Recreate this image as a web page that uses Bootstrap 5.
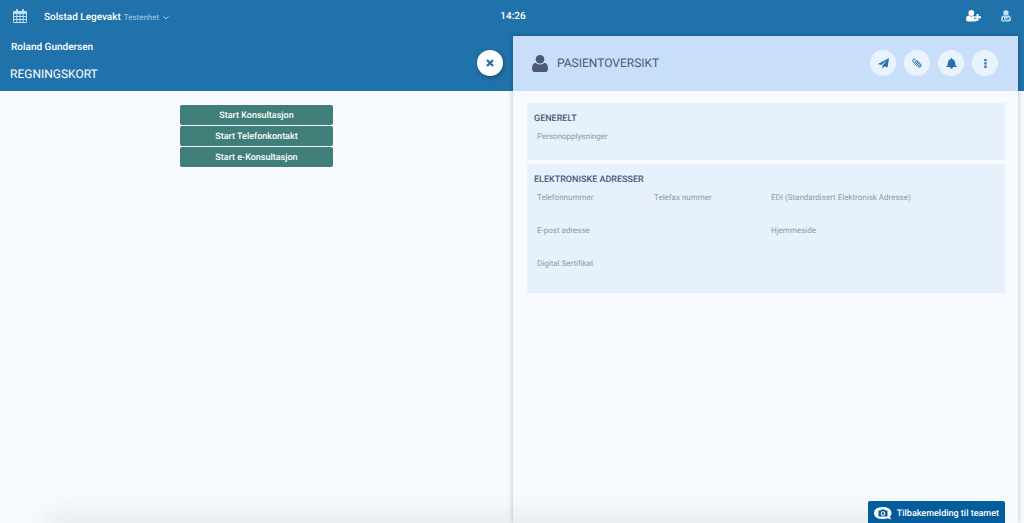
<!DOCTYPE html>
<html lang="no">
<head>
<meta charset="utf-8">
<meta name="viewport" content="width=device-width, initial-scale=1">
<title>Regningskort</title>
<link href="https://cdn.jsdelivr.net/npm/bootstrap@5.3.0/dist/css/bootstrap.min.css" rel="stylesheet">
<style>
  :root { --brand: #2072aa; --ink: #4b5878; --head: 55px; }
  body { font-family: Roboto, sans-serif; font-size: 9px; line-height: 12px; background: #f7faff; color: var(--ink); text-rendering: geometricPrecision; }
  button { text-rendering: inherit; }
  .topbar { height: 36px; background: var(--brand); color: #fff; padding: 0 13px 4px; }
  .topbar .side { flex: 1 1 0; }
  .topbar .btn { color: inherit; line-height: 14px; }
  .topbar .tools { gap: 20px; }
  .unit { font-size: 10px; font-weight: 500; margin-left: 17px; }
  .subunit { font-size: 8px; color: #a3cbe8; margin: 0 4px 0 3px; }
  .clock { font-size: 10px; font-weight: 500; padding: 2px 0 0 2px; }
  .workspace { background: linear-gradient(var(--brand) var(--head), transparent var(--head)); padding-right: 6px; }
  .pane-left { flex: 0 0 calc(50% + 4px); }
  .pane-head { height: var(--head); padding-bottom: 1px; }
  .pane-left .pane-head { padding: 0 10px 1px; }
  .left-names { padding-bottom: 4px; }
  .patient { font-size: 10px; line-height: 16px; font-weight: 500; margin: 0 0 10px 1px; }
  .pane-title { font-size: 12px; line-height: 16px; font-weight: 400; }
  .round { width: 26px; height: 26px; border-radius: 50%; border: 0; padding: 0; background: #e9f3fd; color: var(--brand); display: flex; align-items: center; justify-content: center; }
  .round-close { background: #fff; box-shadow: 1px 2px 4px rgba(0,0,0,.3); }
  .starts { width: 30%; gap: 1px; padding-top: 14px; }
  .btn-start { --bs-btn-color: #fff; --bs-btn-bg: #407e79; --bs-btn-hover-bg: #356b67; --bs-btn-hover-color: #fff; --bs-btn-border-width: 0; --bs-btn-font-size: 9px; --bs-btn-line-height: 12px; --bs-btn-border-radius: 2px; font-weight: 500; padding-top: 5px; padding-bottom: 3px; }
  .pane-right { background: #f7faff; box-shadow: 0 0 5px rgba(0,0,0,.25); }
  .pane-right .pane-head { background: #c9dff9; padding: 0 20px 1px 19px; }
  .pane-right .pane-title { margin-left: 9px; }
  .sections { padding: 12px 13px 12px 14px; gap: 4px; }
  .info { background: #e6f1fc; padding: 10px 5px 0; border-radius: 1px; }
  .info h2 { font-size: 9px; line-height: 12px; font-weight: 500; margin: 0 0 6px 2px; }
  .info dt { font-weight: 400; font-size: 8px; line-height: 12px; color: #8a99b2; height: 33px; padding: 0 5px; }
  .info-short dt { height: 29px; }
  .info-tall { padding-bottom: 2px; }
  .bottom-shade { position: fixed; left: 50px; right: 50px; bottom: -2px; height: 2px; box-shadow: 0 0 26px 4px rgba(60,60,60,.2); pointer-events: none; }
  .feedback { position: fixed; right: 19px; bottom: 0; height: 22px; background: #035c9c; color: #fff; border: 0; border-radius: 2px 2px 0 0; font-size: 9px; font-weight: 500; gap: 5px; padding: 3px 6px 0; }
  svg { display: block; fill: currentColor; }
</style>
</head>
<body class="d-flex flex-column min-vh-100">
<header class="topbar d-flex align-items-center">
  <div class="side d-flex align-items-center">
    <button class="btn p-0 border-0" aria-label="Kalender">
      <svg width="14" height="14" viewBox="0 0 14 14" style="color:#c3def2"><path fill-rule="evenodd" d="M1 2h2V1q0-1 1-1t1 1v1h4V1q0-1 1-1t1 1v1h2l1 1v10l-1 1H1l-1-1V3zM1 5v2h2.300V5zm3.300 0v2h2.200V5zm3.200 0v2h2.200V5zm3.200 0v2H13V5zM1 8v2h2.300V8zm3.300 0v2h2.200V8zm3.200 0v2h2.200V8zm3.200 0v2H13V8zM1 11v2h2.300v-2zm3.300 0v2h2.200v-2zm3.200 0v2h2.200v-2zm3.200 0v2H13v-2z"/></svg>
    </button>
    <button class="btn p-0 border-0 d-flex align-items-center pt-1">
      <span class="unit">Solstad Legevakt</span>
      <span class="subunit">Testenhet</span>
      <svg width="6" height="6" viewBox="0 0 6 6"><path d="M.5 1.500L3 4l2.500-2.500" fill="none" stroke="#a3cbe8"/></svg>
    </button>
  </div>
  <time class="clock">14:26</time>
  <div class="side tools d-flex align-items-center justify-content-end">
    <button class="btn p-0 border-0" aria-label="Ny pasient">
      <svg width="15" height="12" viewBox="0 0 15 12"><circle cx="5.300" cy="3" r="2.900"/><path d="M2.500 5.500Q5.300 7.500 8 5.500V9h2.500v2Q10 11.500 9 11.500H2Q0 11.500 0 9.500 0 6 2.500 5.500zM10.500 4h2v2.300H15v2h-2.500v2.400h-2V8.300H8.300v-2h2.200z"/></svg>
    </button>
    <button class="btn p-0 border-0" aria-label="Min profil">
      <svg width="10" height="12" viewBox="0 0 10 12" style="color:#c3def2"><circle cx="5" cy="3" r="2.700"/><path fill-rule="evenodd" d="M2.300 5.300Q5 7.300 7.700 5.300 10 6.300 10 9.500q0 2-1.500 2h-7Q0 11.500 0 9.500 0 6.300 2.300 5.300zM2.200 7v1.800l-.8.800v1h.7V10h.9v.6h.7v-1L3 8.800V7zm4.600 0v1L6 8.700v1.600h.7V9.200h1.100v1.100h.7V8.700L7.600 8V7zM4.600 8v2.500h.8V8z"/></svg>
    </button>
  </div>
</header>
<main class="workspace d-flex flex-grow-1">
  <section class="pane-left">
    <div class="pane-head text-white d-flex justify-content-between align-items-center">
      <div class="left-names">
        <div class="patient">Roland Gundersen</div>
        <h1 class="pane-title mb-0">REGNINGSKORT</h1>
      </div>
      <button class="round round-close" aria-label="Lukk">
        <svg width="8" height="8" viewBox="0 0 8 8"><path d="M1 1l6 6M7 1L1 7" stroke="currentColor" stroke-width="2.300"/></svg>
      </button>
    </div>
    <div class="starts d-flex flex-column mx-auto">
      <button class="btn btn-start">Start Konsultasjon</button>
      <button class="btn btn-start">Start Telefonkontakt</button>
      <button class="btn btn-start">Start e-Konsultasjon</button>
    </div>
  </section>
  <section class="pane-right flex-grow-1">
    <div class="pane-head d-flex align-items-center">
      <svg width="16" height="17" viewBox="0 0 16 17"><circle cx="8" cy="4.300" r="4.300"/><path d="M3.500 7.700Q8 11.500 12.500 7.700 16 8.500 16 13.500q0 3.500-3 3.500H3q-3 0-3-3.500 0-5 3.500-5.800z"/></svg>
      <h1 class="pane-title mb-0 me-auto">PASIENTOVERSIKT</h1>
      <div class="d-flex gap-2">
        <button class="round" aria-label="Send"><svg width="11" height="11" viewBox="0 0 11 11"><path d="M11 0L9.500 9.500 6.300 8.200 4.500 10.800V7.600L9.200 2 3.200 7 0 5.900z"/></svg></button>
        <button class="round" aria-label="Vedlegg"><svg width="10" height="10" viewBox="0 0 10 10"><path d="M2.500 3.500l4 4q1 .8 1.600.2t-.3-1.600L3.500 1.800Q2 .6 1 1.500t.2 2.500l4.300 4.400q2 1.600 3.200.5t-.2-3L5 2.500M3.500 3l3.500 3.500" fill="none" stroke="currentColor" stroke-width=".9"/></svg></button>
        <button class="round" aria-label="Varsler"><svg width="11" height="11" viewBox="0 0 11 11"><path d="M5 0h1v.9Q9 1.500 9 4.500 9 7.500 11 9H7Q6.900 10.700 5.500 10.700T4 9H0Q2 7.500 2 4.500 2 1.500 5 .9z"/></svg></button>
        <button class="round" aria-label="Mer"><svg width="3" height="9" viewBox="0 0 3 9"><rect width="2.300" height="2.300" x=".3" rx=".5"/><rect y="3.300" width="2.300" height="2.300" x=".3" rx=".5"/><rect y="6.600" width="2.300" height="2.300" x=".3" rx=".5"/></svg></button>
      </div>
    </div>
    <div class="sections d-flex flex-column">
      <section class="info info-short">
        <h2>GENERELT</h2>
        <dl class="row g-0 mb-0"><dt class="col-12">Personopplysninger</dt></dl>
      </section>
      <section class="info info-tall">
        <h2>ELEKTRONISKE ADRESSER</h2>
        <dl class="row g-0 mb-0">
          <dt class="col-3">Telefonnummer</dt><dt class="col-3">Telefax nummer</dt><dt class="col-6">EDI (Standardisert Elektronisk Adresse)</dt>
          <dt class="col-6">E-post adresse</dt><dt class="col-6">Hjemmeside</dt>
          <dt class="col-12">Digital Sertifikat</dt>
        </dl>
      </section>
    </div>
  </section>
</main>
<div class="bottom-shade"></div>
<button class="feedback d-flex align-items-center">
  <svg width="18" height="13" viewBox="0 0 18 13"><path fill-rule="evenodd" d="M9 0c5 0 8.500 2.500 8.500 6 0 1.800-.7 3-1.800 4l1.800 2.500-4-1.200Q11.500 12 9 12 0 12 0 6 0 0 9 0zM4.500 3.500v6h9v-6h-2l-.8-1H7.300l-.8 1zM9 4.200a2.300 2.300 0 1 1 0 4.600 2.300 2.300 0 0 1 0-4.600zm0 1a1.300 1.300 0 1 0 0 2.600 1.300 1.300 0 0 0 0-2.600z"/></svg>
  Tilbakemelding til teamet
</button>
<script src="https://cdn.jsdelivr.net/npm/bootstrap@5.3.0/dist/js/bootstrap.bundle.min.js"></script>
</body>
</html>
